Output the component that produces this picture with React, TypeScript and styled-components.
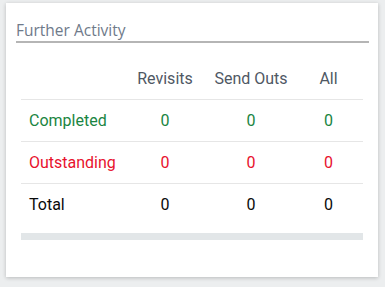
import React from "react";
import styled, { createGlobalStyle } from "styled-components";

const GlobalStyle = createGlobalStyle`
  html, body {
    margin: 0;
    padding: 0;
    background: #eceeef;
  }
  body {
    font-family: Roboto, "Liberation Sans", sans-serif;
  }
`;

const Page = styled.div`
  padding: 3px 7px 10px 6px;
`;

const Card = styled.section`
  width: 372px;
  height: 274px;
  box-sizing: border-box;
  background: #ffffff;
  box-shadow: 0 1px 4px rgba(0, 0, 0, 0.22);
  padding: 18px 9px 0 10px;
`;

const Title = styled.h2`
  margin: 0;
  padding: 0 0 1px;
  font-family: "Open Sans", "Noto Sans", sans-serif;
  font-size: 15.5px;
  font-weight: 400;
  line-height: 19px;
  color: #6f7a8a;
  border-bottom: 2px solid #b5b5b5;
`;

const Body = styled.div`
  padding: 14px 5px 0 5px;
`;

const Table = styled.table`
  width: 342px;
  border-collapse: collapse;
  table-layout: fixed;
  font-size: 16px;
`;

const HeadCell = styled.th`
  height: 42px;
  padding: 0;
  font-weight: 400;
  color: #4f5864;
  text-align: center;
`;

const Row = styled.tr`
  border-top: 1px solid #e6e6e6;
`;

type Tone = "good" | "bad" | "plain";

const toneColor: Record<Tone, string> = {
  good: "#1a8542",
  bad: "#e8112d",
  plain: "#0a0a0a",
};

const LabelCell = styled.td<{ $tone: Tone }>`
  height: 41px;
  padding: 0 0 0 8px;
  font-weight: 400;
  color: ${(p) => toneColor[p.$tone]};
`;

const ValueCell = styled.td<{ $tone: Tone }>`
  padding: 0;
  text-align: center;
  font-weight: 400;
  color: ${(p) => toneColor[p.$tone]};
`;

const Track = styled.div`
  margin-top: 8px;
  width: 342px;
  height: 7px;
  background: #e2e6e8;
`;

const rows: { label: string; tone: Tone; values: number[] }[] = [
  { label: "Completed", tone: "good", values: [0, 0, 0] },
  { label: "Outstanding", tone: "bad", values: [0, 0, 0] },
  { label: "Total", tone: "plain", values: [0, 0, 0] },
];

export default function App() {
  return (
    <Page>
      <GlobalStyle />
      <Card>
        <Title>Further Activity</Title>
        <Body>
          <Table>
            <colgroup>
              <col style={{ width: 101 }} />
              <col style={{ width: 86 }} />
              <col style={{ width: 86 }} />
              <col style={{ width: 69 }} />
            </colgroup>
            <thead>
              <tr>
                <HeadCell />
                <HeadCell>Revisits</HeadCell>
                <HeadCell>Send Outs</HeadCell>
                <HeadCell>All</HeadCell>
              </tr>
            </thead>
            <tbody>
              {rows.map((r) => (
                <Row key={r.label}>
                  <LabelCell $tone={r.tone}>{r.label}</LabelCell>
                  {r.values.map((v, i) => (
                    <ValueCell key={i} $tone={r.tone}>
                      {v}
                    </ValueCell>
                  ))}
                </Row>
              ))}
            </tbody>
          </Table>
          <Track />
        </Body>
      </Card>
    </Page>
  );
}
